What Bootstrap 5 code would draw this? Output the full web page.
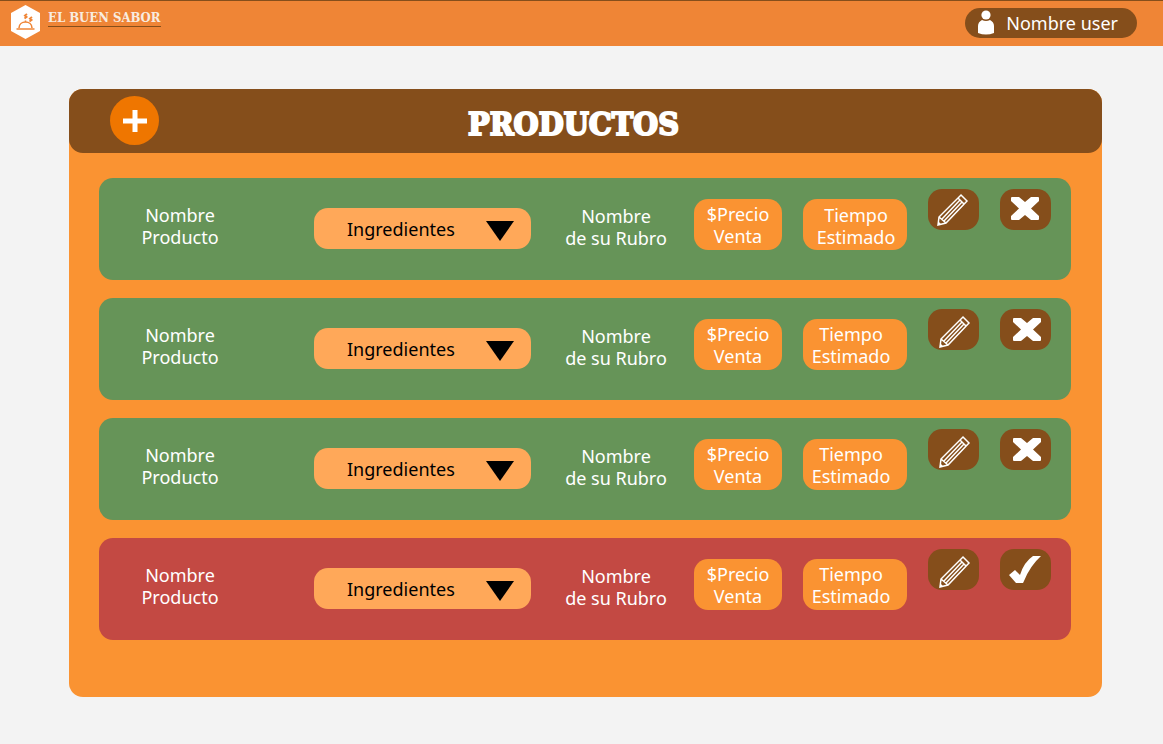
<!DOCTYPE html>
<html lang="es">
<head>
<meta charset="utf-8">
<meta name="viewport" content="width=device-width, initial-scale=1">
<title>El Buen Sabor - Productos</title>
<link href="https://cdn.jsdelivr.net/npm/bootstrap@5.3.0/dist/css/bootstrap.min.css" rel="stylesheet">
<style>
body{background:#f3f3f3;font-family:"Noto Sans",sans-serif;font-size:18px;line-height:22px}
.topbar{background:#ef8536;border-top:1px solid #854e1b;padding:4px 26px 7px 10px}
.brand-text{font:bold 13px/16px "DejaVu Serif Condensed","DejaVu Serif",serif;color:#f8ece0;border-bottom:1px solid #854e1b;margin-top:5px}
.user-pill,.user-pill:hover{background:#854e1b;color:#fff;height:30px;border:0;border-radius:15px;padding:0 19px 0 12px;font-size:18px;line-height:22px;gap:11px;margin-top:3px}
.page-main{padding:43px 61px 47px 69px}
.panel{background:#fa9332;border-radius:14px;padding-bottom:57px}
.panel-head{background:#854e1b;border-radius:14px;height:64px;padding:6px 24px 0 0}
.panel-title{font:bold 32px/40px "DejaVu Serif Condensed","DejaVu Serif",serif;color:#fff;-webkit-text-stroke:2px #fff}
.btn-add{left:41px;top:7px;width:49px;height:49px;background:#ef7600}
.product-list{padding:25px 31px 0 30px;gap:18px}
.product{display:grid;grid-template-columns:minmax(120px,1fr) 217px 121px 88px 104px 51px 51px;column-gap:21px;height:102px;padding-right:20px;border-radius:14px;background:#669458;color:#fff;text-align:center}
.product.inactive{background:#c34943}
.product-name{padding:26px 32px 0 0}
.rubro{padding:27px 0 0 7px}
.ingredients{margin-top:30px;height:41px;border:0;border-radius:14px;padding:0 50px 0 33px;appearance:none;color:#000;background:#ffa859 url("data:image/svg+xml,%3Csvg xmlns='http://www.w3.org/2000/svg' width='28' height='20'%3E%3Cpath d='M0 0H28L14 20Z'/%3E%3C/svg%3E") no-repeat right 17px top 13px}
.tag{margin-top:21px;height:51px;border-radius:14px;background:#fa9332;padding-top:4px}
.tag-time{padding-right:8px}
.product:first-child .tag-time{padding:5px 0 0 2px}
.btn-tool{margin-top:11px;width:51px;height:41px;border-radius:14px;background:#854e1b}
.btn-tool svg{display:block}
.btn-tool:hover{background:#a05f22}
.btn-add:hover{background:#d96b00}
</style>
</head>
<body>
<svg class="d-none" xmlns="http://www.w3.org/2000/svg">
<symbol id="pencil" viewBox="0 0 51 41"><path d="M33 6L39 12L18 34L10 36L11 28ZM11 28L18 34M30 9L36 15M14 30L32 11M16 32L34 13M10 33L12 35" fill="none" stroke="#fff" stroke-width="1.5"/></symbol>
<symbol id="cross" viewBox="0 0 51 41"><path d="M12 7H19L25 12L31 7H38Q39 7 39 8V11L31 18.500L39 26V29Q39 30 38 30H31L25 25L19 30H12Q11 30 11 29V26L19 18.500L11 11V8Q11 7 12 7Z" fill="#fff"/></symbol>
<symbol id="tick" viewBox="0 0 51 41"><path d="M9 26L15 21L20 26Q24 13 33 7H41Q30 17 24 32L23 34H16Z" fill="#fff"/></symbol>
</svg>
<header class="topbar d-flex justify-content-between align-items-start">
<a href="#" class="d-flex align-items-start text-decoration-none gap-2">
<svg width="30" height="34" viewBox="0 0 30 34"><path d="M15.500 0L30 8V26L15.500 34L1 26V8Z" fill="#fff"/><g fill="none" stroke="#ef8536" stroke-width="1.600"><path d="M9 23C9 15 22 15 22 23M6.500 24H24.500M15.500 17V15.500"/><path d="M17 9L15 10.500L16.500 12L14.500 13.500M22 12L20 13.500L21.500 15L19.500 16.500" stroke-width="2"/></g></svg>
<span class="brand-text">EL BUEN SABOR</span></a>
<button type="button" class="btn user-pill d-flex align-items-center">
<svg width="18" height="26" viewBox="0 0 18 26"><circle cx="9" cy="5" r="4.600" fill="#fff"/><path d="M5 10Q9 12 13 10Q17 12 17 16V23Q9 26 1 23V16Q1 12 5 10Z" fill="#fff"/></svg><span>Nombre user</span></button>
</header>
<main class="page-main">
<section class="panel">
<div class="panel-head position-relative d-flex align-items-center justify-content-center">
<button type="button" class="btn btn-add position-absolute rounded-circle border-0 p-0 d-flex align-items-center justify-content-center" aria-label="Agregar producto"><svg width="24" height="22"><path d="M12 0V22M0 11H24" stroke="#fff" stroke-width="5"/></svg></button>
<h1 class="panel-title m-0">PRODUCTOS</h1>
</div>
<div class="product-list d-flex flex-column">
<article class="product">
<div class="product-name">Nombre<br>Producto</div>
<select class="ingredients" aria-label="Ingredientes"><option>Ingredientes</option></select>
<div class="rubro">Nombre<br>de su Rubro</div>
<div class="tag">$Precio<br>Venta</div>
<div class="tag tag-time">Tiempo<br>Estimado</div>
<button type="button" class="btn btn-tool p-0 border-0" aria-label="Editar"><svg width="51" height="41"><use href="#pencil"/></svg></button>
<button type="button" class="btn btn-tool p-0 border-0" aria-label="Eliminar"><svg width="51" height="41"><use href="#cross" y="1"/></svg></button>
</article>
<article class="product">
<div class="product-name">Nombre<br>Producto</div>
<select class="ingredients" aria-label="Ingredientes"><option>Ingredientes</option></select>
<div class="rubro">Nombre<br>de su Rubro</div>
<div class="tag">$Precio<br>Venta</div>
<div class="tag tag-time">Tiempo<br>Estimado</div>
<button type="button" class="btn btn-tool p-0 border-0" aria-label="Editar"><svg width="51" height="41"><use href="#pencil" x="2" y="2"/></svg></button>
<button type="button" class="btn btn-tool p-0 border-0" aria-label="Eliminar"><svg width="51" height="41"><use href="#cross" x="2" y="2"/></svg></button>
</article>
<article class="product">
<div class="product-name">Nombre<br>Producto</div>
<select class="ingredients" aria-label="Ingredientes"><option>Ingredientes</option></select>
<div class="rubro">Nombre<br>de su Rubro</div>
<div class="tag">$Precio<br>Venta</div>
<div class="tag tag-time">Tiempo<br>Estimado</div>
<button type="button" class="btn btn-tool p-0 border-0" aria-label="Editar"><svg width="51" height="41"><use href="#pencil" x="2" y="2"/></svg></button>
<button type="button" class="btn btn-tool p-0 border-0" aria-label="Eliminar"><svg width="51" height="41"><use href="#cross" x="2" y="2"/></svg></button>
</article>
<article class="product inactive">
<div class="product-name">Nombre<br>Producto</div>
<select class="ingredients" aria-label="Ingredientes"><option>Ingredientes</option></select>
<div class="rubro">Nombre<br>de su Rubro</div>
<div class="tag">$Precio<br>Venta</div>
<div class="tag tag-time">Tiempo<br>Estimado</div>
<button type="button" class="btn btn-tool p-0 border-0" aria-label="Editar"><svg width="51" height="41"><use href="#pencil" x="2" y="2"/></svg></button>
<button type="button" class="btn btn-tool p-0 border-0" aria-label="Activar"><svg width="51" height="41"><use href="#tick"/></svg></button>
</article>
</div>
</section>
</main>
<script src="https://cdn.jsdelivr.net/npm/bootstrap@5.3.0/dist/js/bootstrap.bundle.min.js"></script>
</body>
</html>
